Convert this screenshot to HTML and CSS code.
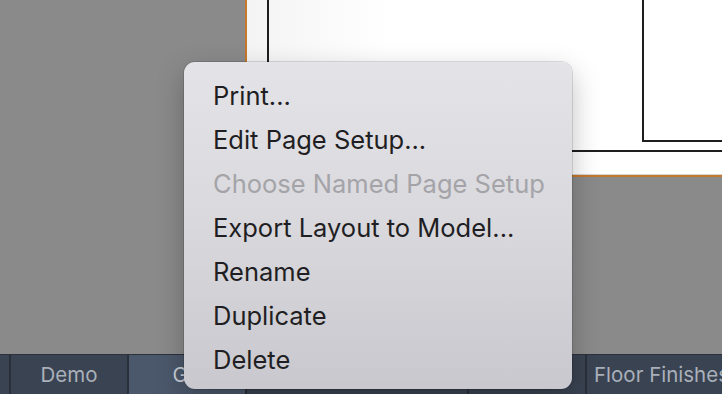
FILE: index.html
```html
<!DOCTYPE html>
<html lang="en">
<head>
    <meta charset="UTF-8">
    <meta name="viewport" content="width=device-width, initial-scale=1.0">
    <title>Layout Context Menu</title>
    <link rel="stylesheet" href="styles.css">
</head>
<body>
    <div class="app">
        <div class="workspace">
            <div class="paper">
                <div class="frame">
                    <div class="title-block"></div>
                </div>
            </div>
        </div>

        <nav class="tabs">
            <div class="tab edge"></div>
            <div class="tab">Demo</div>
            <div class="tab active">GA</div>
            <div class="tab wide"></div>
            <div class="tab"></div>
            <div class="tab">Floor Finishes</div>
        </nav>

        <ul class="context-menu">
            <li class="menu-item">Print...</li>
            <li class="menu-item">Edit Page Setup...</li>
            <li class="menu-item disabled">Choose Named Page Setup</li>
            <li class="menu-item">Export Layout to Model...</li>
            <li class="menu-item">Rename</li>
            <li class="menu-item">Duplicate</li>
            <li class="menu-item">Delete</li>
        </ul>
    </div>
</body>
</html>
```

FILE: styles.css
```css
html, body {
    margin: 0;
    padding: 0;
    height: 100%;
}

body {
    font-family: 'Inter', 'Noto Sans', sans-serif;
    background-color: #8a8a8a;
    overflow: hidden;
}

.app {
    position: relative;
    display: flex;
    flex-direction: column;
    height: 394px;
    width: 722px;
}

.workspace {
    flex: 1;
    background-color: #8a8a8a;
}

.paper {
    margin-left: 245px;
    height: 174px;
    padding-left: 20px;
    background: linear-gradient(90deg, #f4f4f4 0%, #ffffff 30%);
    border-left: 2px solid #c4782c;
    border-bottom: 1px solid #d6d6d6;
    box-shadow: 0 2px 0 #c4782c;
}

.frame {
    height: 150px;
    border-left: 2px solid #1e1e1e;
    border-bottom: 2px solid #1e1e1e;
}

.title-block {
    margin-left: 373px;
    height: 140px;
    border-left: 2px solid #1e1e1e;
    border-bottom: 2px solid #1e1e1e;
}

.tabs {
    display: flex;
    height: 39px;
    background-color: #3a4352;
    border-top: 1px solid #2c323c;
}

.tab {
    width: 116px;
    flex-shrink: 0;
    border-right: 2px solid #2a303a;
    color: #a9b0ba;
    font-size: 20.5px;
    line-height: 40px;
    text-align: center;
    white-space: nowrap;
    overflow: hidden;
}

.tab.edge {
    width: 9px;
}

.tab.active {
    background-color: #4b586b;
    color: #c9ced6;
}

.tab.wide {
    width: 220px;
}

.tab:last-child {
    flex: 1;
    border-right: none;
    text-align: left;
    padding-left: 7px;
}

.context-menu {
    position: absolute;
    left: 184px;
    top: 62px;
    width: 388px;
    margin: 0;
    padding: 12px 0 7px;
    list-style: none;
    box-sizing: border-box;
    border-radius: 11px;
    background: linear-gradient(180deg, #e4e3e8 0%, #d9d8dd 50%, #c8c8ce 100%);
    box-shadow: 0 0 0 1px rgba(0, 0, 0, 0.12), 0 10px 28px rgba(0, 0, 0, 0.25);
}

.menu-item {
    height: 44px;
    line-height: 44px;
    padding-left: 29px;
    font-size: 25.5px;
    color: #1f1f23;
    white-space: nowrap;
}

.menu-item.disabled {
    color: #a4a4a8;
}
```
